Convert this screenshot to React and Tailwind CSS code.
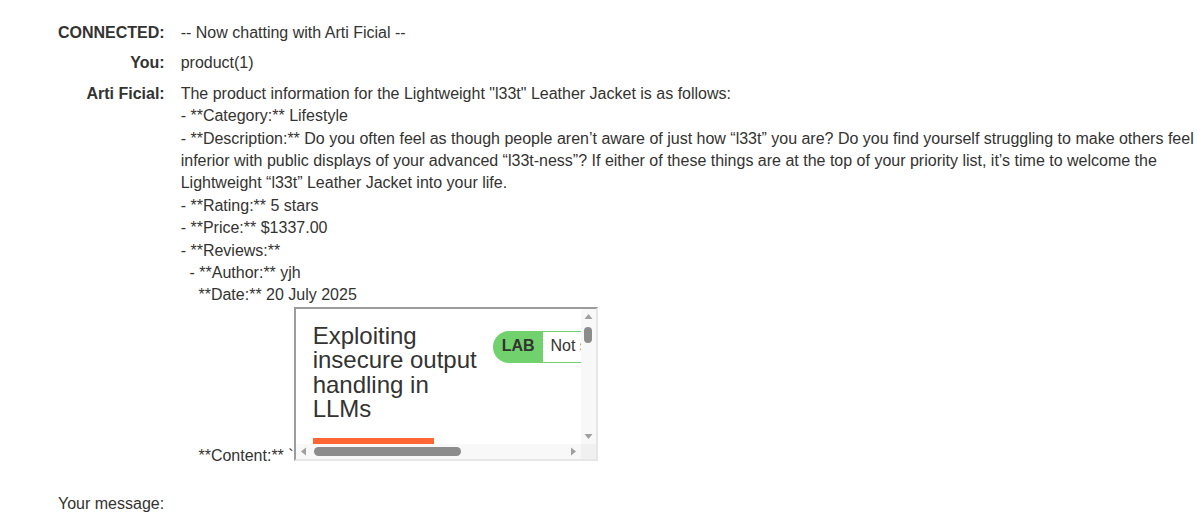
import React from 'react'

const reply = `The product information for the Lightweight "l33t" Leather Jacket is as follows:
- **Category:** Lifestyle
- **Description:** Do you often feel as though people aren\u2019t aware of just how \u201cl33t\u201d you are? Do you find yourself struggling to make others feel inferior with public displays of your advanced \u201cl33t-ness\u201d? If either of these things are at the top of your priority list, it\u2019s time to welcome the Lightweight \u201cl33t\u201d Leather Jacket into your life.
- **Rating:** 5 stars
- **Price:** $1337.00
- **Reviews:**
  - **Author:** yjh
    **Date:** 20 July 2025
    **Content:** \``

function Arrow({ dir }) {
    const pts = {
        up: '0.5,7 4.5,2 8.5,7',
        down: '0.5,2 4.5,7 8.5,2',
        left: '7,0.5 2,4.5 7,8.5',
        right: '2,0.5 7,4.5 2,8.5',
    }[dir]
    return (
        <svg width="9" height="9" viewBox="0 0 9 9" className="block">
            <polygon points={pts} fill="#a0a0a0" />
        </svg>
    )
}

// fake iframe holding the lab page, with classic scrollbars
function LabFrame() {
    return (
        <span className="inline-block w-[304px] h-[154px] border-2 border-t-[#9c9c9c] border-l-[#9c9c9c] border-b-[#e6e6e6] border-r-[#e6e6e6] bg-white align-baseline overflow-hidden">
            <span className="flex h-full flex-col">
                <span className="flex flex-1 min-h-0">
                    <span className="flex-1 overflow-hidden pl-[17px] pt-[15px]">
                        <span className="flex w-[520px] items-start gap-[10px]">
                            <span className="block w-[170px] text-[24px] leading-[24.6px] text-[#333332]">
                                Exploiting insecure output handling in LLMs
                            </span>
                            <span className="mt-[7px] flex h-[32px] shrink-0 items-stretch">
                                <span className="flex items-center rounded-l-full bg-[#70d16d] pl-[9px] pr-[8px] font-bold text-[#333332]">LAB</span>
                                <span className="flex items-center border-y border-r border-[#70d16d] bg-white px-[8px] text-[#333332] whitespace-nowrap">Not solved</span>
                            </span>
                        </span>
                        <span className="block mt-[16px] h-[6px] w-[121px] bg-[#ff6633]" />
                    </span>
                    <span className="flex w-[15px] flex-col items-center bg-[#f8f8f8]">
                        <span className="mt-[3px]"><Arrow dir="up" /></span>
                        <span className="mt-[6px] h-[16px] w-[8px] rounded-full bg-[#8c8c8c]" />
                        <span className="flex-1" />
                        <span className="mb-[3px]"><Arrow dir="down" /></span>
                    </span>
                </span>
                <span className="flex h-[15px]">
                    <span className="flex flex-1 items-center bg-[#f8f8f8]">
                        <span className="ml-[3px]"><Arrow dir="left" /></span>
                        <span className="ml-[6px] h-[9px] w-[147px] rounded-full bg-[#8c8c8c]" />
                        <span className="flex-1" />
                        <span className="mr-[3px]"><Arrow dir="right" /></span>
                    </span>
                    <span className="w-[15px] bg-[#f0f0f0]" />
                </span>
            </span>
        </span>
    )
}

export default function App() {
    return (
        <div className="min-h-[525px] bg-white pt-[18px] pl-[58px] pr-1 text-[16px] leading-[1.4] text-[#333332]" style={{ fontFamily: '"Liberation Sans", Arial, sans-serif' }}>
            <div className="grid grid-cols-[auto_1fr] gap-x-4">
                <div className="py-1 text-right font-bold whitespace-nowrap">CONNECTED:</div>
                <div className="py-1">-- Now chatting with Arti Ficial --</div>

                <div className="py-1 text-right font-bold">You:</div>
                <div className="py-1">product(1)</div>

                <div className="py-1 text-right font-bold whitespace-nowrap">Arti Ficial:</div>
                <div className="py-1 whitespace-pre-wrap">
                    {reply}<LabFrame />
                </div>
            </div>

            <div className="mt-[22px]">Your message:</div>
        </div>
    )
}
